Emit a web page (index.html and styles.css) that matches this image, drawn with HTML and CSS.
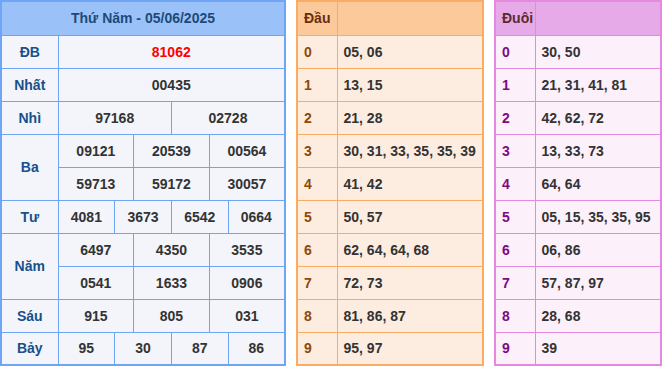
FILE: index.html
```html
<!DOCTYPE html>
<html lang="vi">
<head>
  <meta charset="UTF-8" />
  <meta name="viewport" content="width=device-width, initial-scale=1.0" />
  <title>Kết quả xổ số 05/06/2025</title>
  <link rel="stylesheet" href="styles.css">
</head>
<body>
  <div class="board">
    <table class="result">
      <colgroup>
        <col class="col-label">
        <col span="12">
      </colgroup>
      <tr>
        <th colspan="13" class="title">Thứ Năm - 05/06/2025</th>
      </tr>
      <tr>
        <td class="label">ĐB</td>
        <td colspan="12" class="special">81062</td>
      </tr>
      <tr>
        <td class="label">Nhất</td>
        <td colspan="12">00435</td>
      </tr>
      <tr>
        <td class="label">Nhì</td>
        <td colspan="6">97168</td>
        <td colspan="6">02728</td>
      </tr>
      <tr>
        <td class="label" rowspan="2">Ba</td>
        <td colspan="4">09121</td>
        <td colspan="4">20539</td>
        <td colspan="4">00564</td>
      </tr>
      <tr>
        <td colspan="4">59713</td>
        <td colspan="4">59172</td>
        <td colspan="4">30057</td>
      </tr>
      <tr>
        <td class="label">Tư</td>
        <td colspan="3">4081</td>
        <td colspan="3">3673</td>
        <td colspan="3">6542</td>
        <td colspan="3">0664</td>
      </tr>
      <tr>
        <td class="label" rowspan="2">Năm</td>
        <td colspan="4">6497</td>
        <td colspan="4">4350</td>
        <td colspan="4">3535</td>
      </tr>
      <tr>
        <td colspan="4">0541</td>
        <td colspan="4">1633</td>
        <td colspan="4">0906</td>
      </tr>
      <tr>
        <td class="label">Sáu</td>
        <td colspan="4">915</td>
        <td colspan="4">805</td>
        <td colspan="4">031</td>
      </tr>
      <tr>
        <td class="label">Bảy</td>
        <td colspan="3">95</td>
        <td colspan="3">30</td>
        <td colspan="3">87</td>
        <td colspan="3">86</td>
      </tr>
    </table>

    <table class="loto head">
      <colgroup>
        <col class="col-digit">
        <col>
      </colgroup>
      <tr><th>Đầu</th><th></th></tr>
      <tr><td class="digit">0</td><td>05, 06</td></tr>
      <tr><td class="digit">1</td><td>13, 15</td></tr>
      <tr><td class="digit">2</td><td>21, 28</td></tr>
      <tr><td class="digit">3</td><td>30, 31, 33, 35, 35, 39</td></tr>
      <tr><td class="digit">4</td><td>41, 42</td></tr>
      <tr><td class="digit">5</td><td>50, 57</td></tr>
      <tr><td class="digit">6</td><td>62, 64, 64, 68</td></tr>
      <tr><td class="digit">7</td><td>72, 73</td></tr>
      <tr><td class="digit">8</td><td>81, 86, 87</td></tr>
      <tr><td class="digit">9</td><td>95, 97</td></tr>
    </table>

    <table class="loto tail">
      <colgroup>
        <col class="col-digit">
        <col>
      </colgroup>
      <tr><th>Đuôi</th><th></th></tr>
      <tr><td class="digit">0</td><td>30, 50</td></tr>
      <tr><td class="digit">1</td><td>21, 31, 41, 81</td></tr>
      <tr><td class="digit">2</td><td>42, 62, 72</td></tr>
      <tr><td class="digit">3</td><td>13, 33, 73</td></tr>
      <tr><td class="digit">4</td><td>64, 64</td></tr>
      <tr><td class="digit">5</td><td>05, 15, 35, 35, 95</td></tr>
      <tr><td class="digit">6</td><td>06, 86</td></tr>
      <tr><td class="digit">7</td><td>57, 87, 97</td></tr>
      <tr><td class="digit">8</td><td>28, 68</td></tr>
      <tr><td class="digit">9</td><td>39</td></tr>
    </table>
  </div>
</body>
</html>
```

FILE: styles.css
```css
body {
  margin: 0;
  padding: 0;
  background: #ffffff;
  font-family: "Liberation Sans", Arial, sans-serif;
}

.board {
  display: flex;
  align-items: flex-start;
  gap: 10px;
}

table {
  border-collapse: collapse;
  table-layout: fixed;
  font-size: 14px;
  font-weight: bold;
  color: #333333;
}

th, td {
  height: 33px;
  padding: 0;
  box-sizing: border-box;
}

th {
  height: 34px;
}

/* left: prize table */
.result {
  width: 286px;
  border: 2px solid #6ea5f5;
  background: #f3f5fa;
}

.result .col-label {
  width: 57px;
}

.result th, .result td {
  border: 1px solid #6ea5f5;
  text-align: center;
}

.result .title {
  background: #9bc2f8;
  color: #1c4a78;
}

.result .label {
  color: #17508a;
}

.result .special {
  color: #ff0000;
}

/* middle and right: loto tables */
.loto th, .loto td {
  text-align: left;
  padding: 0 6px;
}

.loto .col-digit {
  width: 40px;
}

.head {
  width: 188px;
  border: 2px solid #fbac62;
  background: #fdede0;
}

.head th, .head td {
  border: 1px solid #fbac62;
}

.head th {
  background: #fbc99a;
  color: #6a2e0c;
}

.head .digit {
  color: #8c4a0a;
}

.tail {
  width: 168px;
  border: 2px solid #e488e0;
  background: #fcf0fb;
}

.tail th, .tail td {
  border: 1px solid #e488e0;
}

.tail th {
  background: #e6aae8;
  color: #5c2a2e;
}

.tail .digit {
  color: #7c0a84;
}
```
